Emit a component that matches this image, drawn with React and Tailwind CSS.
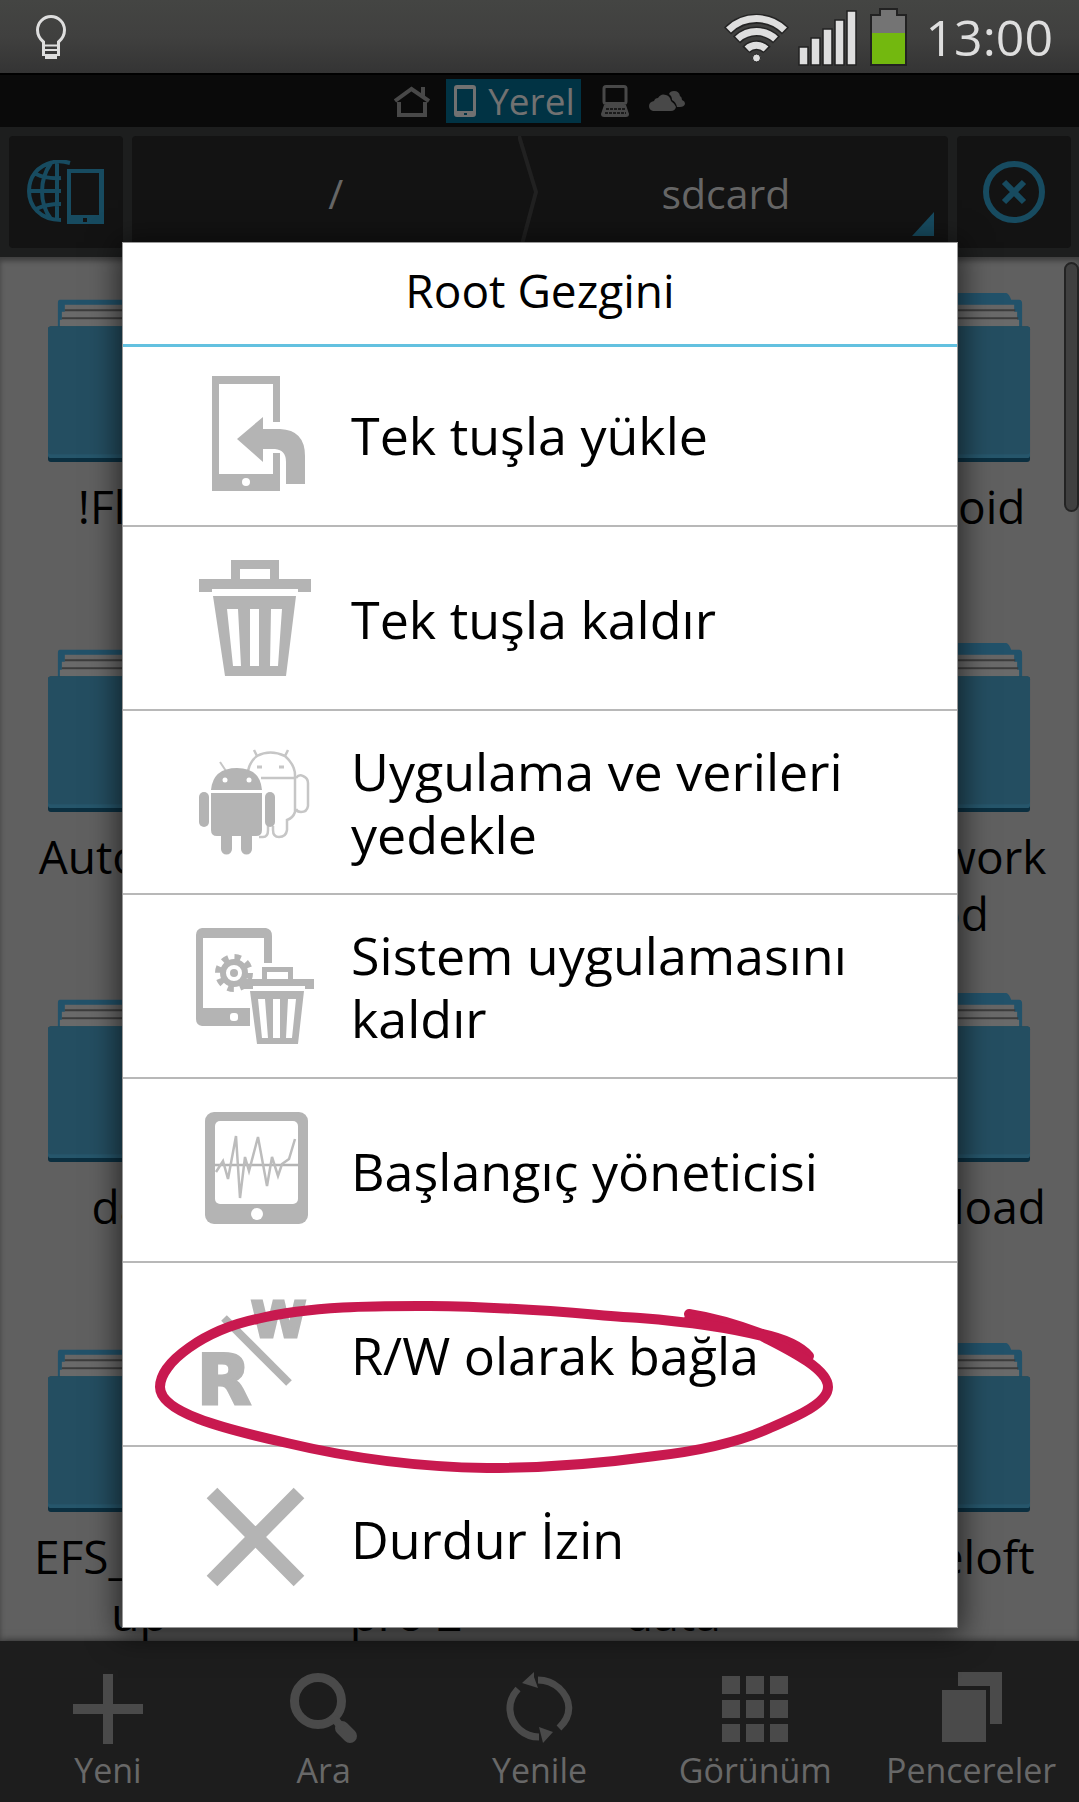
import React from 'react';

const folders = [
    ['!Flash'], ['Albums'], ['Alarms'], ['Android'],
    ['Autodesk'], ['Backup'], ['Books'], ['clockwork', 'mod'],
    ['data'], ['DCIM'], ['Docs'], ['download'],
    ['EFS_Back-', 'up'], ['File', 'pro 2'], ['game', 'data'], ['gameloft'],
];

const Folder = ({ lines }) => (
    <button className="flex flex-col items-center gap-3.5">
        <svg viewBox="0 0 184 172" className="h-[172px] w-[182px] shrink-0">
            <path d="M12 7H96L102 0H159Q162 1 164 7H172Q175 7 175 11V40H10V10Q10 7 12 7Z" fill="#22526a" />
            <path d="M17 12H167V34H17Z" fill="#666" />
            <path d="M17 17.500H168" stroke="#3c3c3c" strokeWidth="2" />
            <path d="M14 19H170V34H14Z" fill="#6a6a6a" />
            <path d="M14 25.500H171" stroke="#3c3c3c" strokeWidth="2" />
            <path d="M12 27H172V34H12Z" fill="#6a6a6a" />
            <rect x="0" y="34" width="183" height="137" rx="3" fill="#0b2f40" />
            <rect x="0" y="34" width="183" height="133" rx="3" fill="#26566b" />
            <rect x="0" y="34" width="183" height="129" rx="3" fill="#244e61" />
        </svg>
        <span className="text-center text-[46px] leading-[57px] text-black">
            {lines.map((line) => (
                <span key={line} className="block">{line}</span>
            ))}
        </span>
    </button>
);

const InstallIcon = () => (
    <g>
        <path d="M17 0H85V46H78V8H24V98H78V77H85V115H17Z" />
        <circle cx="51" cy="106" r="4" fill="#fff" />
        <path d="M42 63L68 41V53H85Q110 54 110 80V108H91V86Q91 74 80 73H68V86Z" />
    </g>
);

const TrashIcon = () => (
    <g>
        <path fillRule="evenodd" d="M36 0H84V19H116V32H103V29H17V32H4V19H36ZM45 9V19H75V9Z" />
        <path
            fillRule="evenodd"
            d="M18 36H101L91 116H30ZM32 49L38 106H46L43 49ZM55 49V106H64V49ZM76 49L75 106H83L87 49Z"
        />
    </g>
);

const AndroidIcon = () => (
    <g>
        <g fill="none" stroke="#c6c6c6" strokeWidth="2.500">
            <path d="M53 27Q55 17 62 12L59 6M62 12Q75 5 90 12L93 6M90 12Q100 21 100 31V68Q98 74 92 76V86Q91 93 84 93Q78 93 78 86V82M64 93H68Q73 93 73 86V82M66 34H100" />
            <path d="M101 34Q104 30 108 32Q113 34 113 39V62Q112 68 106 68Q102 68 101 65" />
            <path d="M62 23H67M84 23H89" strokeWidth="3" />
        </g>
        <path d="M25 18L31 27" stroke="#c6c6c6" strokeWidth="2" />
        <path d="M16 46Q18 24 42 24Q65 24 67 46Z" />
        <circle cx="30" cy="36" r="2.500" fill="#fff" />
        <circle cx="54" cy="36" r="2.500" fill="#fff" />
        <path d="M16 49H67V86Q67 92 61 92H57V105A5.500 5.500 0 0 1 46 105V92H37V105A5.500 5.500 0 0 1 26 105V92H22Q16 92 16 86Z" />
        <rect x="4" y="48" width="10" height="35" rx="5" />
        <rect x="70" y="48" width="10" height="35" rx="5" />
    </g>
);

const SystemTrashIcon = () => (
    <g>
        <path d="M7 0H71Q77 1 77 8V35H69V10H8V80H55V98H7Q1 97 1 91V7Q1 1 7 0Z" />
        <rect x="35" y="85" width="8" height="8" rx="3" fill="#fff" />
        <circle cx="39" cy="45" r="16" fill="none" stroke="#b4b4b4" strokeWidth="6" strokeDasharray="6.283 6.283" />
        <circle cx="39" cy="45" r="11" fill="none" stroke="#b4b4b4" strokeWidth="6" />
        <circle cx="39" cy="45" r="4" />
        <path fillRule="evenodd" d="M67 39H98V51H119V61H110V58H58V61H48V51H67ZM72 44V51H93V44Z" />
        <path
            fillRule="evenodd"
            d="M55 63H109L103 116H62ZM63 71L67 110H73L70 71ZM78 71V110H85V71ZM93 71L91 110H97L101 71Z"
        />
    </g>
);

const MonitorIcon = () => (
    <g>
        <rect x="10" y="0" width="103" height="112" rx="9" />
        <rect x="20" y="9" width="83" height="83" rx="5" fill="#fff" />
        <circle cx="62" cy="102" r="6" fill="#fff" />
        <path d="M20 53H103" stroke="#b4b4b4" strokeWidth="2.500" />
        <path
            d="M21 60L28 49L33 67L41 24L45 86L50 45L54 59L63 25L72 74L77 45L83 64L87 52L94 47L100 27"
            fill="none"
            stroke="#bcbcbc"
            strokeWidth="2.500"
        />
    </g>
);

const ReadWriteIcon = () => (
    <g>
        <g fontFamily="'DejaVu Sans'" fontWeight="700" stroke="#b4b4b4" strokeWidth="3">
            <text x="56" y="41" fontSize="50">W</text>
            <text x="2" y="108" fontSize="70">R</text>
        </g>
        <path d="M29 22L94 87" stroke="#b4b4b4" strokeWidth="8" />
    </g>
);

const CloseIcon = () => <path d="M17 13L104 101M104 13L17 101" stroke="#b4b4b4" strokeWidth="15" />;

// hand-drawn marker around the R/W entry
const Marker = () => (
    <svg viewBox="150 1297 690 180" className="pointer-events-none absolute top-[34px] left-[27px] z-10 h-[180px] w-[690px]">
        <g fill="none" stroke="#c8194f" strokeWidth="10" strokeLinecap="round" strokeLinejoin="round">
            <path d="M689 1314C715 1318 738 1325 762 1334C785 1339 800 1346 809 1356" />
            <path d="M689 1319C720 1322 742 1328 762 1335C780 1341 795 1349 806 1359" />
            <path d="M762 1336C785 1348 828 1368 828 1387C828 1403 798 1416 770 1428C735 1444 690 1452 655 1456C590 1465 530 1468 487 1468C420 1467 350 1458 287 1443C220 1428 160 1412 160 1387C160 1362 205 1330 257 1319C315 1305 385 1306 430 1306C530 1307 600 1316 640 1318C690 1322 735 1329 762 1336Z" />
        </g>
    </svg>
);

const menuItems = [
    { label: 'Tek tuşla yükle', Icon: InstallIcon },
    { label: 'Tek tuşla kaldır', Icon: TrashIcon },
    { label: 'Uygulama ve verileri yedekle', Icon: AndroidIcon },
    { label: 'Sistem uygulamasını kaldır', Icon: SystemTrashIcon },
    { label: 'Başlangıç yöneticisi', Icon: MonitorIcon },
    { label: 'R/W olarak bağla', Icon: ReadWriteIcon, marked: true },
    { label: 'Durdur İzin', Icon: CloseIcon },
];

const MenuItem = ({ label, Icon, marked }) => (
    <li className="relative border-b-2 border-[#b8b8b8] last:-mb-1 last:border-transparent">
        <button className="flex h-[182px] w-full items-center gap-9 pr-8 pl-[72px] text-left">
            <svg viewBox="0 0 120 116" className="h-[116px] w-[120px] shrink-0" fill="#b4b4b4">
                <Icon />
            </svg>
            <span className="text-[52px] leading-[63px] font-medium text-black">{label}</span>
        </button>
        {marked && <Marker />}
    </li>
);

const RootDialog = () => (
    <div className="absolute inset-x-0 top-[242px] pr-[121px] pl-[122px]">
        <div
            role="dialog"
            aria-labelledby="dialog-title"
            className="border border-[#999] bg-white shadow-[0_4px_28px_4px_rgba(0,0,0,0.6)]"
        >
            <h1 id="dialog-title" className="border-b-3 border-[#63c1e0] pt-4 pb-[22px] text-center text-[46px] leading-[63px] font-medium text-black">
                Root Gezgini
            </h1>
            <ul className="-mt-1">
                {menuItems.map((item) => (
                    <MenuItem key={item.label} {...item} />
                ))}
            </ul>
        </div>
    </div>
);

const StatusBar = () => (
    <header className="flex h-[75px] shrink-0 items-center border-b-2 border-black bg-linear-to-b from-[#444543] via-[#40403f] to-[#343434] pr-[26px] pl-9 text-[#dedede]">
        <svg viewBox="36 16 30 44" className="h-11 w-[30px]" fill="none" stroke="#dedede" strokeWidth="3">
            <path d="M43.500 57V43Q37.500 38 37.500 31A13.500 13.500 0 0 1 64.500 31Q64.500 38 58.500 43V57" />
            <path d="M44 46.500H58M44 51H58M44 56H58" strokeWidth="2" />
            <path d="M45 58H57" strokeWidth="4" />
        </svg>
        <div className="ml-auto flex items-center">
            <svg viewBox="723 9 68 58" className="mr-2 h-[58px] w-[68px]" fill="none">
                <g stroke="#242424" strokeWidth="10">
                    <path d="M728.500 32A40.500 40.500 0 0 1 786.500 32M737.500 41A28 28 0 0 1 777.500 41M747 51A14 14 0 0 1 768 51" />
                </g>
                <g stroke="#dedede" strokeWidth="7">
                    <path d="M729.500 31A40 40 0 0 1 785.500 31M738.500 40A28 28 0 0 1 776.500 40M748 50A14 14 0 0 1 767 50" />
                </g>
                <circle cx="757.500" cy="59" r="4" fill="#dedede" stroke="#242424" />
            </svg>
            <svg viewBox="799 9 60 58" className="mr-3 h-[58px] w-[60px]" fill="#dedede" stroke="#222" strokeWidth="1.500">
                <path d="M800 48h9v18h-9zM812 39h9v27h-9zM824 30h9v36h-9zM836 21h9v45h-9zM848 12h9v54h-9z" />
            </svg>
            <svg viewBox="871 9 38 58" className="mr-[18px] h-[58px] w-[38px]">
                <path d="M872 16H881V10H898V16H907V66H872Z" fill="#747474" stroke="#222" strokeWidth="2" />
                <path d="M873 34H906V65H873Z" fill="#73b80f" />
            </svg>
            <span className="text-[50px] leading-[70px] font-medium">13:00</span>
        </div>
    </header>
);

const WindowTabs = () => (
    <nav className="flex h-[52px] shrink-0 items-center justify-center gap-4 bg-[#0a0a0a]">
        <button aria-label="home">
            <svg viewBox="0 0 36 32" className="block h-8 w-9" fill="none" stroke="#484848" strokeWidth="4">
                <path d="M1 16L17.500 4L35 16M29 11V2M5 17V30H31V17" />
            </svg>
        </button>
        <button className="flex h-11 items-center gap-3 bg-[#013344] pr-1.5 pl-2 text-[37px] leading-[44px] text-[#717171]">
            <svg viewBox="0 0 22 32" className="h-8 w-[22px]">
                <path fill="#717171" fillRule="evenodd" d="M3 0H19Q22 0 22 3V29Q22 32 19 32H3Q0 32 0 29V3Q0 0 3 0ZM3 4V26H19V4ZM10 28V30H13V28Z" />
            </svg>
            Yerel
        </button>
        <button aria-label="lan">
            <svg viewBox="0 0 36 32" className="block h-8 w-9">
                <rect x="7" y="1.500" width="22" height="17" rx="2" fill="none" stroke="#484848" strokeWidth="3" />
                <path d="M7 20H29L32 29Q32 32 29 32H7Q4 32 4 29Z" fill="#484848" />
                <path d="M9 24H28M8 28H29" stroke="#1a1a1a" strokeWidth="2" strokeDasharray="3 1" />
            </svg>
        </button>
        <button aria-label="cloud">
            <svg viewBox="0 0 36 32" className="block h-8 w-9" fill="#484848">
                <path d="M4 26Q0 25 0 21Q0 17 5 16Q6 13 9 13Q12 8 17 10Q21 11 22 16Q26 19 27 22Q26 26 22 26Z" />
                <path d="M20 9Q21 6 25 6Q30 6 31 11Q33 12 33 15Q36 16 36 19Q35 22 31 22H28Q27 17 23 15Q23 11 20 9Z" />
            </svg>
        </button>
    </nav>
);

const PathBar = () => (
    <div className="flex h-[130px] shrink-0 gap-[9px] bg-[#1d1e1e] pt-[9px] pr-2 pb-[9px] pl-[9px] text-[41px] text-[#666]">
        <button aria-label="location" className="flex w-[114px] items-center justify-center rounded bg-[#131313]">
            <svg viewBox="27 160 78 64" className="h-16 w-[78px]">
                <g fill="none" stroke="#174b60" strokeWidth="4">
                    <path d="M70 163Q60 160 53 162C37 166 29 177 29 191C29 206 40 220 61 220M57 162V221M51 163C39 180 39 203 51 219M36 174Q46 179 61 178M29 191H61M36 209Q46 204 61 204" />
                </g>
                <path fill="#174b60" fillRule="evenodd" d="M67 169H104V224H67ZM71 173V215H99V173ZM83 218V222H87V218Z" />
            </svg>
        </button>
        <div className="relative flex flex-1 rounded bg-[#131313]">
            <button className="flex-[29] pt-1 pl-[22px]">/</button>
            <svg viewBox="0 0 20 112" className="h-full w-5" fill="none" stroke="#212121" strokeWidth="4">
                <path d="M1 0L18 56L3 112" />
            </svg>
            <button className="flex-[30] pt-1 pr-[34px]">sdcard</button>
            <svg viewBox="0 0 22 24" className="absolute right-3.5 bottom-3 h-6 w-[22px]">
                <path d="M22 0V24H0Z" fill="#174b60" />
            </svg>
        </div>
        <button aria-label="close" className="flex w-[114px] items-center justify-center rounded bg-[#131313]">
            <svg viewBox="0 0 64 64" className="h-16 w-16" fill="none" stroke="#174b60">
                <circle cx="32" cy="32" r="28" strokeWidth="6" />
                <path d="M22 22L42 42M42 22L22 42" strokeWidth="6" />
            </svg>
        </button>
    </div>
);

const actions = [
    {
        label: 'Yeni',
        icon: <path d="M31 2H41V32H71V42H41V72H31V42H1V32H31Z" />,
    },
    {
        label: 'Ara',
        icon: (
            <g fill="none" stroke="#4a4a4a">
                <circle cx="30" cy="29" r="23.500" strokeWidth="9" />
                <path d="M54 56L62 64" strokeWidth="14" strokeLinecap="round" />
                <path d="M46 46L54 56" strokeWidth="8" />
            </g>
        ),
    },
    {
        label: 'Yenile',
        icon: (
            <g>
                <g fill="none" stroke="#4a4a4a" strokeWidth="7">
                    <path d="M15 17C3 30 5 47 17 58Q25 65 36 65M35 8Q47 8 56 16C68 27 70 43 56 56" />
                </g>
                <path d="M19 11L31 0V5L35 16ZM50 60L40 71L36 55Z" />
            </g>
        ),
    },
    {
        label: 'Görünüm',
        icon: (
            <path d="M3 4h18v18h-18zM27 4h18v18h-18zM51 4h18v18h-18zM3 28h18v18h-18zM27 28h18v18h-18zM51 28h18v18h-18zM3 52h18v18h-18zM27 52h18v18h-18zM51 52h18v18h-18z" />
        ),
    },
    {
        label: 'Pencereler',
        icon: <path d="M23 0H67V52H55V14H23ZM7 18H51V70H7Z" />,
    },
];

const BottomBar = () => (
    <footer className="relative grid h-[161px] shrink-0 grid-cols-5 bg-[#1d1d1d] pt-[31px] shadow-[0_0_8px_rgba(0,0,0,0.6)]">
        {actions.map(({ label, icon }) => (
            <button key={label} className="flex flex-col items-center gap-1 text-[34px] leading-[44px] text-[#686868]">
                <svg viewBox="0 0 72 72" className="h-[72px] w-[72px]" fill="#4a4a4a">{icon}</svg>
                {label}
            </button>
        ))}
    </footer>
);

export default function App() {
    return (
        <div className="relative flex h-screen min-h-[1640px] flex-col overflow-hidden bg-[#606060] font-['Open_Sans',sans-serif]">
            <StatusBar />
            <WindowTabs />
            <PathBar />
            <main className="relative min-h-0 flex-1 overflow-hidden shadow-[inset_0_4px_5px_rgba(0,0,0,0.35)]">
                <div className="grid auto-rows-[350px] grid-cols-4 items-start px-1.5 pt-[35px]">
                    {folders.map((lines) => (
                        <Folder key={lines.join('')} lines={lines} />
                    ))}
                </div>
                <div className="absolute top-[5px] right-0 h-[250px] w-[15px] rounded-full border-2 border-[#232323] bg-[#404040]" />
            </main>
            <BottomBar />
            <RootDialog />
        </div>
    );
}
